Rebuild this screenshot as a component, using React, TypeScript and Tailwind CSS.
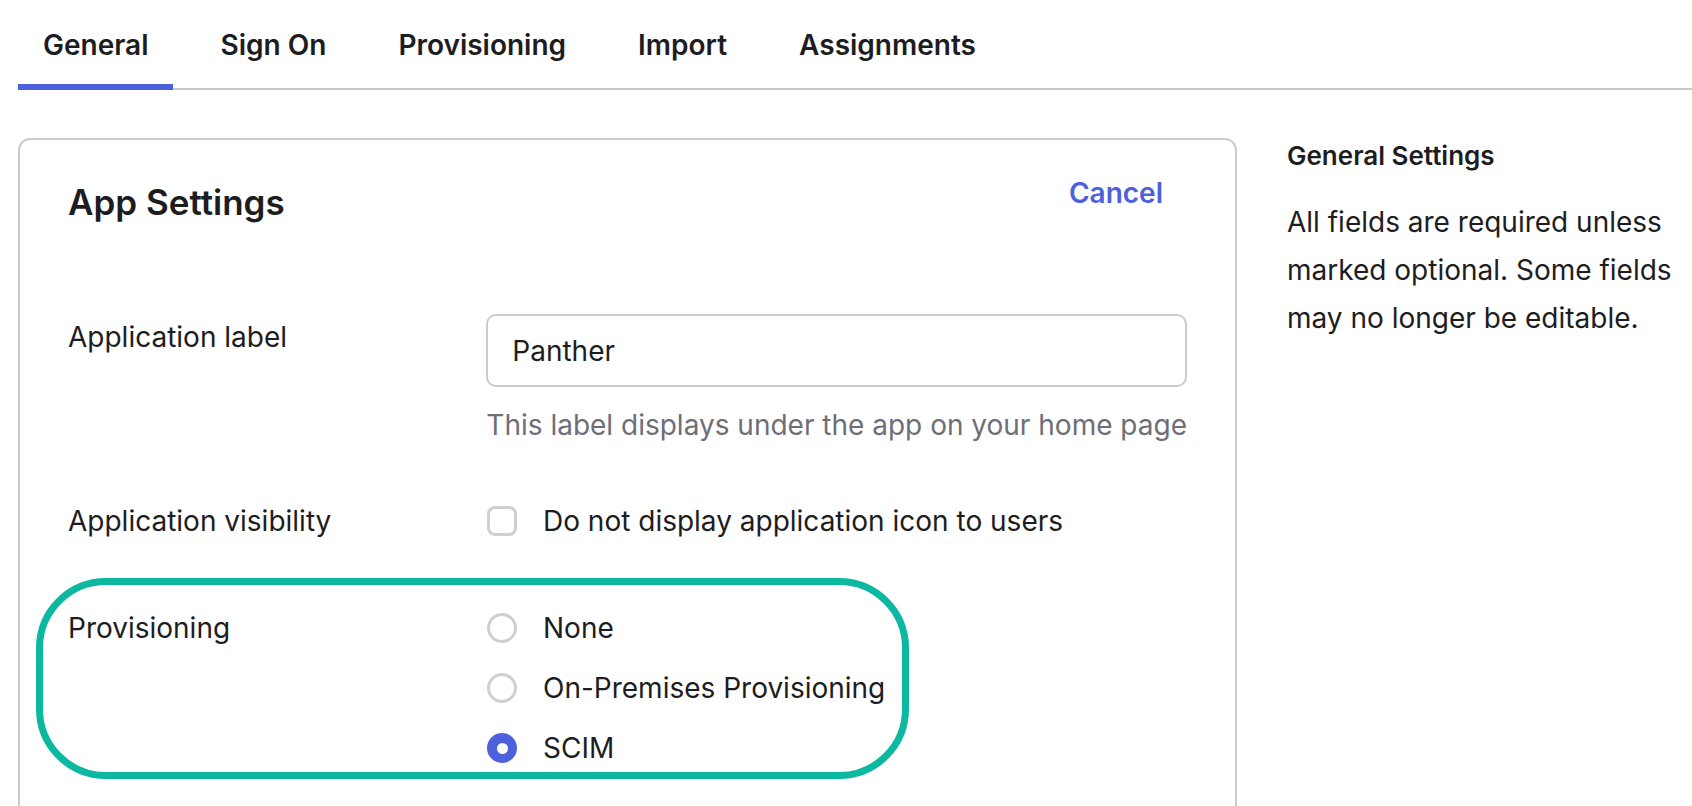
import React from 'react';

const tabs = ['General', 'Sign On', 'Provisioning', 'Import', 'Assignments'];

const Radio = ({ checked, label }: { checked?: boolean; label: string }) => (
  <div className="flex items-center h-[36px]">
    {checked ? (
      <span className="w-[30px] h-[30px] rounded-full bg-[#4e61dc] flex items-center justify-center">
        <span className="w-[11px] h-[11px] rounded-full bg-white" />
      </span>
    ) : (
      <span className="w-[30px] h-[30px] rounded-full border-[3px] border-[#cfcfcf] bg-white" />
    )}
    <span className="ml-[26px]">{label}</span>
  </div>
);

export default function App() {
  return (
    <div className="h-[806px] overflow-hidden bg-white text-[#1d1d21] font-['Inter',sans-serif]">
      {/* tabs */}
      <div className="ml-[18px] flex gap-[22px] border-b-2 border-[#c9c9c9] h-[90px]">
        {tabs.map((t, i) => (
          <div
            key={t}
            className={
              'px-[25px] pt-[27px] text-[28px] font-semibold leading-[36px] h-[90px] ' +
              (i === 0 ? 'border-b-[6px] border-[#4e61dc] -mb-[2px]' : '')
            }
          >
            {t}
          </div>
        ))}
      </div>

      <div className="flex pl-[18px] pt-[48px]">
        {/* card */}
        <div className="w-[1219px] h-[720px] shrink-0 border-2 border-[#cbcbcb] rounded-[12px] pl-[48px] pr-[48px] pt-[42px]">
          <div className="flex justify-between items-start">
            <h2 className="text-[35px] font-semibold leading-[40px]">App Settings</h2>
            <button className="text-[28px] font-semibold text-[#4e61dc] leading-[36px] mr-[24px] -mt-[7px]">
              Cancel
            </button>
          </div>

          <div className="flex mt-[92px] text-[28px] leading-[36px]">
            <div className="w-[419px] pt-[5px]">Application label</div>
            <div className="w-[701px]">
              <div className="h-[73px] border-2 border-[#cbcbcb] rounded-[10px] flex items-center px-[24px]">
                Panther
              </div>
              <div className="mt-[20px] text-[#6e6e78] whitespace-nowrap">
                This label displays under the app on your home page
              </div>
            </div>
          </div>

          <div className="flex mt-[60px] text-[28px] leading-[36px]">
            <div className="w-[419px]">Application visibility</div>
            <div className="flex items-center">
              <span className="w-[30px] h-[30px] rounded-[8px] border-[3px] border-[#cfcfcf]" />
              <span className="ml-[26px]">Do not display application icon to users</span>
            </div>
          </div>

          <div className="relative flex mt-[71px] text-[28px] leading-[36px]">
            <div className="absolute -top-[32px] -left-[32px] w-[873px] h-[201px] border-[7px] border-[#0cb8a0] rounded-[70px] pointer-events-none" />
            <div className="w-[419px]">Provisioning</div>
            <div className="flex flex-col gap-[24px]">
              <Radio label="None" />
              <Radio label="On-Premises Provisioning" />
              <Radio checked label="SCIM" />
            </div>
          </div>
        </div>

        {/* side help */}
        <div className="ml-[50px] pt-[2px]">
          <h3 className="text-[26px] font-semibold leading-[32px]">General Settings</h3>
          <p className="mt-[26px] text-[28px] leading-[48px] w-[395px]">
            All fields are required unless marked optional. Some fields may no longer be editable.
          </p>
        </div>
      </div>
    </div>
  );
}
